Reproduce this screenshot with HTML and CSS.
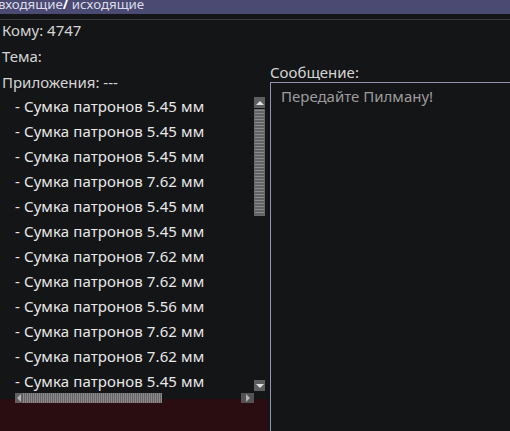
FILE: index.html
```
<html>

<head>
    <title>Почта</title>
    <link rel="stylesheet" href="styles.css">
</head>

<body>
    <div class="tabs">
        <span class="tab-title">входящие<b>/</b> исходящие</span>
    </div>
    <div class="rule"></div>

    <div class="mail">
        <div class="left">
            <div class="field">Кому: 4747</div>
            <div class="field">Тема:</div>
            <div class="field">Приложения: ---</div>

            <div class="attach-box">
                <ul class="attach-list">
                    <li>- Сумка патронов 5.45 мм</li>
                    <li>- Сумка патронов 5.45 мм</li>
                    <li>- Сумка патронов 5.45 мм</li>
                    <li>- Сумка патронов 7.62 мм</li>
                    <li>- Сумка патронов 5.45 мм</li>
                    <li>- Сумка патронов 5.45 мм</li>
                    <li>- Сумка патронов 7.62 мм</li>
                    <li>- Сумка патронов 7.62 мм</li>
                    <li>- Сумка патронов 5.56 мм</li>
                    <li>- Сумка патронов 7.62 мм</li>
                    <li>- Сумка патронов 7.62 мм</li>
                    <li>- Сумка патронов 5.45 мм</li>
                </ul>
                <div class="vscroll">
                    <div class="arrow-box"><span class="arrow up"></span></div>
                    <div class="vthumb"></div>
                    <div class="vtrack"></div>
                    <div class="arrow-box"><span class="arrow down"></span></div>
                </div>
                <div class="hscroll">
                    <div class="arrow-box small"><span class="arrow left-arr"></span></div>
                    <div class="hthumb"></div>
                    <div class="htrack"></div>
                    <div class="arrow-box"><span class="arrow right-arr"></span></div>
                </div>
            </div>
            <div class="footer-panel"></div>
        </div>

        <div class="right">
            <div class="msg-label">Сообщение:</div>
            <div class="msg-box">Передайте Пилману!</div>
        </div>
    </div>
</body>

</html>
```

FILE: styles.css
```
body {
    margin: 0px;
    background-color: #141517;
    font-family: 'Noto Sans', 'DejaVu Sans', sans-serif;
    font-size: 15px;
    color: #d4d4d4;
    overflow: hidden;
    height: 431px;
    display: flex;
    flex-direction: column;
}

.tabs {
    height: 14px;
    flex-shrink: 0;
    background-color: #4b4a72;
    overflow: hidden;
    white-space: nowrap;
}

.tab-title {
    display: block;
    margin-left: -2px;
    margin-top: -5px;
    font-size: 13.3px;
    line-height: 18px;
    color: #dcdcea;
}

.tab-title b {
    color: #ffffff;
}

.rule {
    height: 1px;
    flex-shrink: 0;
    margin-top: 5px;
    background-color: #3a3a3c;
}

.mail {
    display: flex;
    flex-grow: 1;
    min-height: 0px;
}

.left {
    width: 268px;
    flex-shrink: 0;
}

.field {
    height: 26px;
    line-height: 26px;
    padding-left: 2px;
    white-space: nowrap;
}

.field:first-child {
    margin-top: -3px;
}

.attach-box {
    display: grid;
    grid-template-columns: 239px 11px;
    grid-template-rows: 297px 10px;
    margin-left: 15px;
    margin-top: -1px;
    height: 309px;
}

.attach-list {
    list-style: none;
    margin: 0px;
    padding: 0px;
    overflow: hidden;
    color: #e8e8e8;
}

.attach-list li {
    height: 25px;
    line-height: 25px;
    white-space: nowrap;
    letter-spacing: 0.1px;
}

.vscroll {
    display: flex;
    flex-direction: column;
    padding-top: 3px;
}

.arrow-box {
    width: 11px;
    height: 11px;
    flex-shrink: 0;
    background-color: #5e5e60;
    display: flex;
    align-items: center;
    justify-content: center;
}

.arrow {
    width: 0px;
    height: 0px;
    border: 4px solid transparent;
}

.arrow.up {
    border-bottom-color: #e0e0e0;
    border-top-width: 0px;
}

.arrow.down {
    border-top-color: #e0e0e0;
    border-bottom-width: 0px;
}

.arrow.left-arr {
    border-right-color: #d0d0d0;
    border-left-width: 0px;
}

.arrow.right-arr {
    border-left-color: #d0d0d0;
    border-right-width: 0px;
}

.vthumb {
    height: 107px;
    margin-top: 1px;
    background: repeating-linear-gradient(to bottom, #8a8a8c 0px, #8a8a8c 1px, #626264 1px, #626264 3px);
    border: 1px solid #6a6a6c;
    box-sizing: border-box;
}

.vtrack {
    flex-grow: 1;
}

.hscroll {
    grid-column: 1 / 3;
    display: flex;
    height: 10px;
    margin-top: 2px;
    position: relative;
    z-index: 1;
    opacity: 0.85;
}

.hscroll .arrow-box {
    height: 10px;
}

.hscroll .arrow-box.small {
    width: 8px;
    background-color: #6e6e70;
}

.hthumb {
    width: 139px;
    background: repeating-linear-gradient(to right, #a0a0a2 0px, #a0a0a2 1px, #727274 1px, #727274 2px);
}

.htrack {
    flex-grow: 1;
}

.hscroll .arrow-box:last-child {
    width: 13px;
    margin-right: 11px;
}

.footer-panel {
    height: 40px;
    margin-top: -4px;
    background-color: #2a0d10;
}

.right {
    flex-grow: 1;
    display: flex;
    flex-direction: column;
    padding-top: 42px;
    padding-left: 2px;
}

.msg-label {
    line-height: 20px;
    white-space: nowrap;
}

.msg-box {
    flex-grow: 1;
    border: 1px solid #9494ae;
    border-right: none;
    border-bottom: none;
    padding: 2px 10px;
    line-height: 22px;
    color: #9c9c9c;
}
```
